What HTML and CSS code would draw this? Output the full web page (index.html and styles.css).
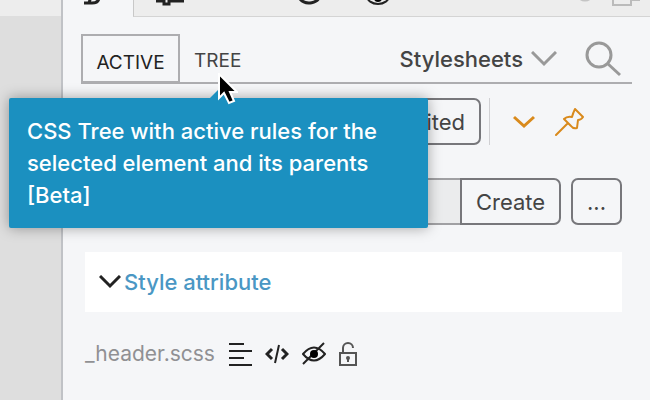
FILE: index.html
```html
<!DOCTYPE html>
<html lang="en">
<head>
  <meta charset="UTF-8">
  <meta name="viewport" content="width=device-width, initial-scale=1.0">
  <title>Styles panel</title>
  <link rel="stylesheet" href="styles.css">
</head>
<body>
  <div class="workspace">
    <div class="gutter"></div>

    <main class="panel">
      <!-- Panel switcher -->
      <nav class="toolbar">
        <button class="tool current" aria-label="Styles">
          <svg width="20" height="24" viewBox="0 0 20 24"><path d="M1 22h8c5 0 7-2 7-6M9 12L6 22" fill="none" stroke="#222" stroke-width="3"/></svg>
        </button>
        <div class="tools">
          <button class="tool" aria-label="Layout">
            <svg width="28" height="24" viewBox="0 0 28 24"><path d="M0 19h7M14 19h14M8 12v10h5V12" fill="none" stroke="#222" stroke-width="3"/></svg>
          </button>
          <button class="tool history" aria-label="History">
            <svg width="24" height="24" viewBox="0 0 24 24"><path d="M2 17a11 9 0 0 0 20-4" fill="none" stroke="#222" stroke-width="3"/></svg>
          </button>
          <button class="tool preview" aria-label="Preview">
            <svg width="24" height="24" viewBox="0 0 24 24"><ellipse cx="12" cy="14" rx="11" ry="8" fill="none" stroke="#222" stroke-width="2"/><circle cx="12" cy="16" r="4"/></svg>
          </button>
          <button class="tool record" aria-label="Record">
            <svg width="16" height="24" viewBox="0 0 16 24"><circle cx="8" cy="10" r="8" fill="none" stroke="#c4c4c4" stroke-width="3"/></svg>
          </button>
          <button class="tool" aria-label="Dock">
            <svg width="38" height="24" viewBox="0 0 38 24"><path d="M1 10v13h18V10M20 18h8" fill="none" stroke="#bbb" stroke-width="2"/></svg>
          </button>
        </div>
      </nav>

      <header class="tabs">
        <button class="tab active">ACTIVE</button>
        <div class="tab-holder">
          <button class="tab" aria-describedby="tree-tip">TREE</button>
          <div class="tooltip" id="tree-tip" role="tooltip">CSS Tree with active rules for the selected element and its parents [Beta]</div>
          <svg class="cursor" width="20" height="32" viewBox="0 0 20 32"><path d="M1 1v24l5-5 5 10 5-2-4-9h7z" fill="#000" stroke="#fff" stroke-width="2"/></svg>
        </div>
        <button class="sheets">Stylesheets
          <svg width="26" height="16" viewBox="0 0 26 16"><path d="M1 1l12 12L25 1" fill="none" stroke="#999" stroke-width="3"/></svg>
        </button>
        <button class="search" aria-label="Search">
          <svg width="36" height="36" viewBox="0 0 36 36"><circle cx="14" cy="14" r="12" fill="none" stroke="#999" stroke-width="3"/><path d="M22 22l13 12" stroke="#999" stroke-width="3"/></svg>
        </button>
      </header>

      <div class="content">
        <div class="row filters">
          <button class="btn wide">Inherited</button>
          <span class="divider"></span>
          <button class="icon" aria-label="More filters">
            <svg width="22" height="14" viewBox="0 0 22 14"><path d="M1 2l10 9L21 2" fill="none" stroke="#d98a1c" stroke-width="3"/></svg>
          </button>
          <button class="icon" aria-label="Pin">
            <svg width="30" height="30" viewBox="0 0 30 30"><path d="M20 2l8 8q-2 3-5 3l-1 8q-4 1-6-2L9 12q3-3 8-2 1-4 3-8zM12 17L1 28" fill="none" stroke="#d98a1c" stroke-width="2" stroke-linejoin="round" stroke-linecap="round"/></svg>
          </button>
        </div>

        <div class="row">
          <input class="selector" type="text" aria-label="Selector">
          <button class="btn create">Create</button>
          <button class="btn more">...</button>
        </div>

        <section class="rule">
          <svg width="22" height="14" viewBox="0 0 22 14"><path d="M1 1l10 10L21 1" fill="none" stroke="#222" stroke-width="3"/></svg>
          <a href="#">Style attribute</a>
        </section>

        <div class="file">
          <span class="file-name">_header.scss</span>
          <button class="icon" aria-label="Go to rules">
            <svg width="24" height="24" viewBox="0 0 24 24"><path d="M1 2h15M1 9h23M1 16h15M1 23h23" stroke="#222" stroke-width="2"/></svg>
          </button>
          <button class="icon" aria-label="Source">
            <svg width="24" height="20" viewBox="0 0 24 20"><path d="M7 5l-5 5 5 5M17 5l5 5-5 5" fill="none" stroke="#222" stroke-width="3"/><path d="M14 1l-4 18" stroke="#222" stroke-width="2"/></svg>
          </button>
          <button class="icon" aria-label="Hide">
            <svg width="24" height="24" viewBox="0 0 24 24"><path d="M1 12q11-13 22 0-11 13-22 0zM1 22L22 1" fill="none" stroke="#222" stroke-width="2"/><circle cx="12" cy="12" r="4"/></svg>
          </button>
          <button class="icon lock" aria-label="Unlock">
            <svg width="18" height="24" viewBox="0 0 18 24"><path d="M1 11h16v12H1zM4 11V6a5 5 0 0 1 10 0M9 15v5" fill="none" stroke="#555" stroke-width="2"/><circle cx="9" cy="16" r="2" fill="#555"/></svg>
          </button>
        </div>
      </div>
    </main>
  </div>
</body>
</html>
```
FILE: styles.css
```css
:root {
  --panel-bg: #f5f6f8;
  --bar-bg: #ededed;
  --line: #adadb0;
  --text: #444;
  --tip-bg: #1b90c0;
}

* {
  box-sizing: border-box;
}

body {
  margin: 0;
  font-family: Inter, "Liberation Sans", sans-serif;
  font-size: 22px;
  color: var(--text);
  background: var(--panel-bg);
}

button {
  padding: 0;
  border: 0;
  background: none;
  font: inherit;
  color: inherit;
}

svg {
  display: block;
  flex: none;
}

.workspace {
  display: flex;
  min-height: 100vh;
}

.gutter {
  width: 63px;
  border-right: 2px solid #c0c2c6;
  background: linear-gradient(var(--bar-bg) 16px, #dedede 16px);
}

.panel {
  flex: 1;
  min-width: 0;
}

/* TOOLBAR */
.toolbar {
  display: flex;
  height: 17px;
  overflow: hidden;
}
.tool {
  display: flex;
  align-items: flex-end;
}
.tool.current {
  width: 70px;
  height: 5px;
  padding-left: 20px;
}
.tools {
  display: flex;
  flex: 1;
  height: 17px;
  padding-left: 22px;
  background: var(--bar-bg);
  border-left: 1px solid #c8c8c8;
  border-bottom: 1px solid #d4d4d4;
}
.tools .tool {
  height: 6px;
}
.history {
  margin-left: 114px;
}
.preview {
  margin-left: 44px;
}
.record {
  margin-left: auto;
  margin-right: 19px;
}

/* TABS */
.tabs {
  display: flex;
  align-items: center;
  height: 49px;
  margin: 18px 18px 0;
  border-bottom: 2px solid var(--line);
}
.tab {
  font-size: 19px;
}
.tab.active {
  width: 99px;
  height: 49px;
  padding-top: 8px;
  border: 2px solid var(--line);
  color: #222;
}
.tab-holder {
  position: relative;
  margin-left: 14px;
}
.sheets {
  display: flex;
  align-items: center;
  gap: 8px;
  margin-left: auto;
  font-weight: 500;
}
.search {
  margin: 0 11px 0 28px;
}

/* TOOLTIP */
.tooltip {
  position: absolute;
  z-index: 1;
  top: 52px;
  left: -185px;
  width: 419px;
  padding: 17px 18px;
  border-radius: 2px;
  background: var(--tip-bg);
  box-shadow: 0 0 14px rgba(0, 0, 0, 0.35);
  font-weight: 500;
  line-height: 32px;
  color: #fff;
}
.tooltip::before {
  content: "";
  position: absolute;
  bottom: 100%;
  left: 201px;
  border: 10px solid transparent;
  border-top: 0;
  border-bottom-color: var(--tip-bg);
}
.cursor {
  position: absolute;
  z-index: 2;
  top: 27px;
  left: 24px;
}

/* CONTENT */
.content {
  padding: 14px 28px 0 22px;
}
.row {
  display: flex;
  align-items: center;
  height: 47px;
  margin-bottom: 33px;
}
.btn {
  height: 47px;
  border: 2px solid #77777b;
  border-radius: 7px;
}
.btn.wide {
  flex: 1;
  padding-right: 14px;
  text-align: right;
}
.divider {
  width: 1px;
  height: 47px;
  margin: 0 23px 0 8px;
  background: #d0d0d3;
}
.filters .icon {
  margin-right: 20px;
}
.filters .icon:last-child {
  margin-right: 37px;
}
.selector {
  flex: 1;
  min-width: 0;
  height: 47px;
  border: 2px solid #a0a0a3;
  border-right: 0;
  background: #ebeced;
  font: inherit;
}
.btn.create {
  width: 101px;
  border-radius: 0 7px 7px 0;
}
.btn.more {
  width: 51px;
  margin-left: 10px;
}

.rule {
  display: flex;
  align-items: center;
  gap: 3px;
  height: 60px;
  margin-top: -6px;
  padding-left: 14px;
  background: #fff;
}
.rule a {
  color: #4a97c4;
  font-weight: 500;
  text-decoration: none;
}

.file {
  display: flex;
  align-items: center;
  gap: 13px;
  margin-top: 29px;
}
.file-name {
  font-size: 21px;
  color: #909093;
}
```
